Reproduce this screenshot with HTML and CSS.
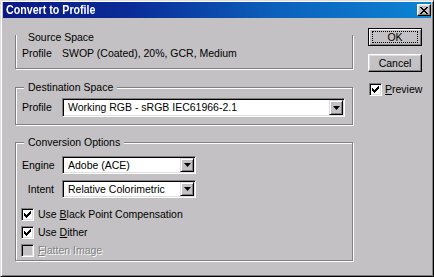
FILE: index.html
```html
<!DOCTYPE html>
<html>
<head>
<meta charset="utf-8">
<link rel="stylesheet" href="styles.css">
</head>
<body>
<div class="window">
  <div class="titlebar">
    <span class="title">Convert to Profile</span>
    <div class="close">
      <svg width="8" height="7" viewBox="0 0 8 7"><path d="M0 0h2v1h-2z M6 0h2v1h-2z M1 1h2v1h-2z M5 1h2v1h-2z M2 2h4v1h-4z M3 3h2v1h-2z M2 4h4v1h-4z M1 5h2v1h-2z M5 5h2v1h-2z M0 6h2v1h-2z M6 6h2v1h-2z" fill="#000"/></svg>
    </div>
  </div>
  <div class="content">
    <div class="left">
      <div class="group source">
        <span class="legend">Source Space</span>
        <div class="srow"><span class="plbl">Profile</span><span>SWOP (Coated), 20%, GCR, Medium</span></div>
      </div>
      <div class="group dest">
        <span class="legend">Destination Space</span>
        <div class="drow">
          <span class="plbl">Profile</span>
          <div class="combo wide">
            <span class="ctext">Working RGB - sRGB IEC61966-2.1</span>
            <span class="arrow"><svg width="7" height="4" viewBox="0 0 7 4"><path d="M0 0h7L3.5 4z" fill="#000"/></svg></span>
          </div>
        </div>
      </div>
      <div class="group conv">
        <span class="legend">Conversion Options</span>
        <div class="crow first">
          <span class="rlbl">Engine</span>
          <div class="combo short">
            <span class="ctext">Adobe (ACE)</span>
            <span class="arrow"><svg width="7" height="4" viewBox="0 0 7 4"><path d="M0 0h7L3.5 4z" fill="#000"/></svg></span>
          </div>
        </div>
        <div class="crow">
          <span class="rlbl">Intent</span>
          <div class="combo short">
            <span class="ctext">Relative Colorimetric</span>
            <span class="arrow"><svg width="7" height="4" viewBox="0 0 7 4"><path d="M0 0h7L3.5 4z" fill="#000"/></svg></span>
          </div>
        </div>
        <div class="chk firstchk">
          <span class="cb"><svg width="7" height="7" viewBox="0 0 7 7"><path d="M6 0h1v1h-1z M5 1h2v1h-2z M0 2h1v1H0z M4 2h3v1H4z M0 3h2v1H0z M3 3h3v1H3z M0 4h5v1H0z M1 5h3v1H1z M2 6h1v1H2z" fill="#000"/></svg></span>
          <span class="ctxt">Use <u>B</u>lack Point Compensation</span>
        </div>
        <div class="chk">
          <span class="cb"><svg width="7" height="7" viewBox="0 0 7 7"><path d="M6 0h1v1h-1z M5 1h2v1h-2z M0 2h1v1H0z M4 2h3v1H4z M0 3h2v1H0z M3 3h3v1H3z M0 4h5v1H0z M1 5h3v1H1z M2 6h1v1H2z" fill="#000"/></svg></span>
          <span class="ctxt">Use <u>D</u>ither</span>
        </div>
        <div class="chk">
          <span class="cb disabled"></span>
          <span class="ctxt dis"><u>F</u>latten Image</span>
        </div>
      </div>
    </div>
    <div class="right">
      <div class="btn default"><span class="focus">OK</span></div>
      <div class="btn cancel"><span class="blabel">Cancel</span></div>
      <div class="chk preview">
        <span class="cb"><svg width="7" height="7" viewBox="0 0 7 7"><path d="M6 0h1v1h-1z M5 1h2v1h-2z M0 2h1v1H0z M4 2h3v1H4z M0 3h2v1H0z M3 3h3v1H3z M0 4h5v1H0z M1 5h3v1H1z M2 6h1v1H2z" fill="#000"/></svg></span>
        <span class="ptxt"><u>P</u>review</span>
      </div>
    </div>
  </div>
</div>
</body>
</html>
```
FILE: styles.css
```css
* { box-sizing: border-box; }
html, body { margin: 0; padding: 0; }
body {
  width: 434px;
  height: 277px;
  overflow: hidden;
  background: #c3c1c3;
  font-family: "Liberation Sans", Arial, sans-serif;
  font-size: 10.5px;
  line-height: 13px;
  color: #000;
}
.window {
  width: 434px;
  height: 277px;
  background: #c3c1c3;
  border: 1px solid;
  border-color: #dfdfdf #000 #000 #dfdfdf;
  box-shadow: inset 1px 1px 0 #fff, inset -1px -1px 0 #808080;
  padding: 1px 2px 2px 2px;
}
.titlebar {
  height: 16px;
  background: linear-gradient(to right, #0a1884 0%, #0a2c98 30%, #0c62bc 65%, #0c84d4 100%);
  display: flex;
  align-items: center;
  justify-content: space-between;
}
.title {
  display: inline-block;
  color: #fff;
  font-family: "Liberation Sans", Arial, sans-serif;
  font-weight: bold;
  font-size: 13.5px;
  line-height: 16px;
  margin-left: 3px;
  transform: scaleX(0.79);
  transform-origin: left center;
  white-space: nowrap;
}
.close {
  width: 14px;
  height: 12px;
  background: #c3c1c3;
  border: 1px solid;
  border-color: #fff #000 #000 #fff;
  box-shadow: inset -1px -1px 0 #808080, inset 1px 1px 0 #dfdfdf;
  display: flex;
  align-items: center;
  justify-content: center;
}
.close svg { display: block; }
.content { display: flex; }
.left { margin-left: 12px; width: 338px; }
.group {
  position: relative;
  border: 1px solid #808080;
  box-shadow: inset 1px 1px 0 #fff, 1px 1px 0 #fff;
}
.legend {
  position: absolute;
  left: 8px;
  top: -7px;
  padding: 0 4px;
  background: #c3c1c3;
  white-space: nowrap;
}
.source {
  margin-top: 17px;
  height: 34px;
  border-top: none;
  box-shadow: inset 1px 0 0 #fff, 1px 1px 0 #fff;
  padding: 12px 0 0 6px;
}
.source .legend { top: -4px; }
.srow { display: flex; }
.plbl { width: 40px; }
.dest {
  margin-top: 18px;
  height: 38px;
  padding: 10px 0 0 6px;
}
.drow { display: flex; align-items: center; }
.combo {
  display: flex;
  background: #fff;
  border: 1px solid;
  border-color: #808080 #fff #fff #808080;
  box-shadow: inset 1px 1px 0 #000, inset -1px -1px 0 #dfdfdf;
  padding: 1px;
}
.combo.wide { width: 283px; height: 19px; }
.combo.short { width: 134px; height: 18px; }
.ctext {
  flex: 1;
  padding-left: 4px;
  white-space: nowrap;
  overflow: hidden;
  display: flex;
  align-items: center;
}
.arrow {
  width: 14px;
  background: #c3c1c3;
  border: 1px solid;
  border-color: #dfdfdf #000 #000 #dfdfdf;
  box-shadow: inset 1px 1px 0 #fff, inset -1px -1px 0 #808080;
  display: flex;
  align-items: center;
  justify-content: center;
}
.arrow svg { display: block; }
.conv {
  margin-top: 17px;
  height: 119px;
}
.crow {
  display: flex;
  align-items: center;
  padding-left: 6px;
  margin-top: 6px;
}
.crow.first { margin-top: 13px; }
.rlbl { width: 32px; text-align: right; margin-right: 8px; }
.chk {
  display: flex;
  align-items: center;
  height: 13px;
  padding-left: 5px;
  margin-top: 5px;
}
.chk.firstchk { margin-top: 10px; }
.cb {
  width: 13px;
  height: 13px;
  flex: none;
  background: #fff;
  border: 1px solid;
  border-color: #808080 #fff #fff #808080;
  box-shadow: inset 1px 1px 0 #000, inset -1px -1px 0 #dfdfdf;
  display: flex;
  align-items: center;
  justify-content: center;
}
.cb svg { display: block; }
.cb.disabled { background: #c3c1c3; }
.ctxt { margin-left: 4px; white-space: nowrap; }
.dis { color: #808080; text-shadow: 1px 1px 0 #fff; }
.right { margin-left: 15px; width: 54px; }
.btn {
  width: 54px;
  height: 18px;
  border: 1px solid;
  border-color: #fff #000 #000 #fff;
  box-shadow: inset -1px -1px 0 #808080, inset 1px 1px 0 #dfdfdf;
  display: flex;
  align-items: center;
  justify-content: center;
}
.btn.default {
  margin-top: 10px;
  border-color: #000;
  box-shadow: inset 1px 1px 0 #fff, inset -1px -1px 0 #808080;
  padding: 2px 3px;
}
.focus {
  flex: 1;
  align-self: stretch;
  border: 1px dotted #000;
  display: flex;
  align-items: center;
  justify-content: center;
  line-height: 11px;
}
.btn.cancel { margin-top: 8px; }
.chk.preview { margin-top: 11px; padding-left: 1px; }
.ptxt { margin-left: 3px; white-space: nowrap; }
```
